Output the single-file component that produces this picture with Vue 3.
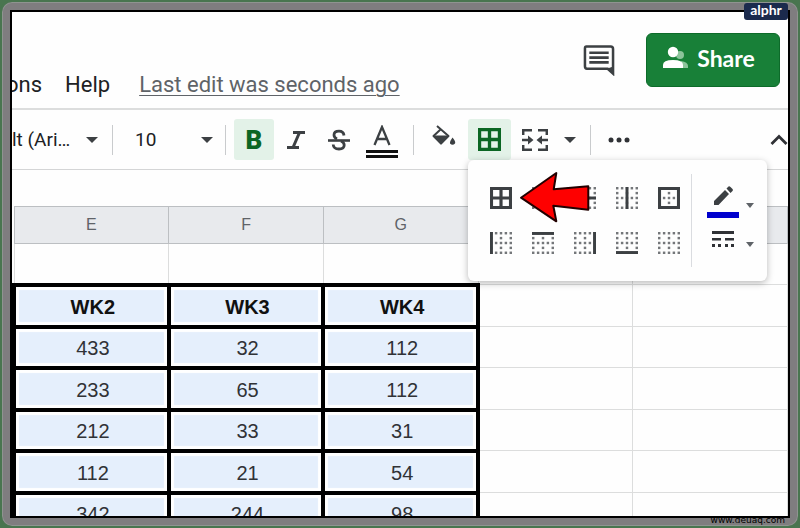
<script setup>
const columns = ['E', 'F', 'G', '', '']
const headings = ['WK2', 'WK3', 'WK4']
const rows = [
  [433, 32, 112],
  [233, 65, 112],
  [212, 33, 31],
  [112, 21, 54],
  [342, 244, 98],
]

const steps = [0, 4, 8, 12, 16]
const dots = []
for (const y of steps) {
  for (const x of steps) {
    if (x % 8 === 0 || y % 8 === 0) dots.push({ x, y })
  }
}

const borderKinds = [
  { name: 'All borders', path: 'M0 0H18V18H0ZM2.500 2.500V7.700H7.700V2.500ZM10.300 2.500V7.700H15.500V2.500ZM2.500 10.300V15.500H7.700V10.300ZM10.300 10.300V15.500H15.500V10.300Z', solid: true },
  { name: 'Inner borders', path: 'M8 0H10V8H18V10H10V18H8V10H0V8H8Z' },
  { name: 'Horizontal borders', path: 'M0 7.800H18V10.200H0Z' },
  { name: 'Vertical borders', path: 'M7.800 0H10.200V18H7.800Z' },
  { name: 'Outer borders', path: 'M0 0H18V18H0ZM2.500 2.500V15.500H15.500V2.500Z', inner: true },
  { name: 'Left border', path: 'M0 0H2.400V18H0Z' },
  { name: 'Top border', path: 'M0 0H18V2.400H0Z' },
  { name: 'Right border', path: 'M15.600 0H18V18H15.600Z' },
  { name: 'Bottom border', path: 'M0 15.600H18V18H0Z' },
  { name: 'Clear borders', path: '' },
]

function dotsFor(kind) {
  if (kind.solid) return []
  if (kind.inner) return dots.filter((d) => d.x > 0 && d.x < 16 && d.y > 0 && d.y < 16)
  return dots
}
</script>

<template>
  <div class="frame">
    <main class="sheet">
      <header class="top">
        <nav class="menu">
          <a href="#" class="cut">ons</a>
          <a href="#">Help</a>
          <a href="#" class="edited">Last edit was seconds ago</a>
        </nav>
        <div class="actions">
          <button class="plain" aria-label="Comments">
            <svg width="32" height="31" viewBox="0 0 32 32">
              <path d="M3 1.500H28Q30.500 1.500 30.500 4V29.500L25 24.500H3.500Q1.500 24.500 1.500 22V3.500Q1.500 1.500 3 1.500Z" fill="none" stroke="#3c4043" stroke-width="2.600" />
              <path d="M24 24.500L31.500 31V22Z" fill="#3c4043" />
              <path d="M6 8H26M6 13H26M6 18H26" stroke="#3c4043" stroke-width="2.800" />
            </svg>
          </button>
          <button class="share">
            <svg width="26" height="24" viewBox="0 0 26 24">
              <g fill="#8cc49b">
                <circle cx="17" cy="9" r="4" />
                <path d="M18 15Q25 16 25 20V22H18Z" />
              </g>
              <circle cx="10" cy="6" r="5.200" fill="#fff" />
              <path d="M0 22V19Q0 14 10 14T20 19V22Z" fill="#fff" />
            </svg>
            Share
          </button>
        </div>
      </header>

      <div class="toolbar">
        <label class="pick family">
          <select aria-label="Font"><option>lt (Ari…</option></select>
          <svg width="12" height="6" viewBox="0 0 12 6"><path d="M0 0H12L6 6Z" fill="#3c4043" /></svg>
        </label>
        <i class="rule"></i>
        <label class="pick size">
          <select aria-label="Font size"><option>10</option></select>
          <svg width="12" height="6" viewBox="0 0 12 6"><path d="M0 0H12L6 6Z" fill="#3c4043" /></svg>
        </label>
        <i class="rule near"></i>
        <button class="tool on bold" aria-label="Bold">B</button>
        <button class="tool" aria-label="Italic">
          <svg width="20" height="20" viewBox="0 0 20 20">
            <path d="M7 2.500H19M1 17.500H13M13.500 2.500L7 17.500" fill="none" stroke="#3c4043" stroke-width="3" />
          </svg>
        </button>
        <button class="tool" aria-label="Strikethrough">
          <svg width="22" height="22" viewBox="0 0 22 22" fill="none" stroke="#3c4043">
            <path d="M16 6.500Q15.500 2.200 11 2.200Q6 2.200 6 6Q6 8.500 9 10M13 12Q16.200 13.500 16.200 16Q16.200 20 11 20Q5.500 20 5.200 15.500" stroke-width="2.800" />
            <path d="M0 11.500H22" stroke-width="2.600" />
          </svg>
        </button>
        <button class="tool ink" aria-label="Text colour">
          <svg width="32" height="34" viewBox="0 0 32 34">
            <path d="M8.500 20L16 2L23.500 20M11 14H21" fill="none" stroke="#3c4043" stroke-width="2.300" />
            <path d="M0 26.500H32M0 31.500H32" stroke="#111" stroke-width="2.800" />
          </svg>
        </button>
        <i class="rule tight"></i>
        <button class="tool fill" aria-label="Fill colour">
          <svg width="24" height="22" viewBox="0 0 24 22">
            <path d="M5 1L16.500 11L9 18.500L1.500 11L8.500 4.500" fill="none" stroke="#3c4043" stroke-width="2" stroke-linejoin="round" />
            <path d="M1 10.500H17L9 19.500Z" fill="#3c4043" />
            <path d="M20.500 12.500Q24 16.500 23 18.500Q20.500 21 18 18.500Q17.500 16.500 20.500 12.500Z" fill="#3c4043" />
          </svg>
        </button>
        <div class="anchor">
          <button class="tool on wide" aria-label="Borders" aria-expanded="true">
            <svg width="23" height="23" viewBox="0 0 18 18"><path :d="borderKinds[0].path" fill="#0b6623" fill-rule="evenodd" /></svg>
          </button>
          <section class="popup" aria-label="Border options">
            <div class="kinds">
              <button v-for="kind in borderKinds" :key="kind.name" class="plain" :aria-label="kind.name">
                <svg width="22" height="22" viewBox="0 0 18 18">
                  <rect v-for="d in dotsFor(kind)" :key="d.x + '-' + d.y" :x="d.x" :y="d.y" width="2" height="2" fill="#74777a" />
                  <path :d="kind.path" fill="#3c4043" fill-rule="evenodd" />
                </svg>
              </button>
            </div>
            <div class="pens">
              <button class="plain" aria-label="Border colour">
                <svg width="32" height="38" viewBox="0 0 32 38">
                  <path d="M7 15L18 4L22 8L11.500 19H7ZM19.500 2.500L21.500 0.500Q22.500 0 23.500 1L25.500 3Q26.500 4 25.500 5L23.500 7Z" fill="#3c4043" />
                  <path d="M0 26H32V32H0Z" fill="#0000cd" />
                </svg>
                <svg class="caret high" width="8" height="5" viewBox="0 0 8 5"><path d="M0 0H8L4 5Z" fill="#5f6368" /></svg>
              </button>
              <button class="plain" aria-label="Border style">
                <svg width="32" height="16" viewBox="0 0 32 16">
                  <path d="M5 0H27V3H5ZM5 7H14V9.500H5ZM18 7H27V9.500H18ZM5 13H8V16H5ZM11 13H14V16H11ZM18 13H21V16H18ZM24 13H27V16H24Z" fill="#303236" />
                </svg>
                <svg class="caret" width="8" height="5" viewBox="0 0 8 5"><path d="M0 0H8L4 5Z" fill="#5f6368" /></svg>
              </button>
            </div>
            <svg class="pointer" width="72" height="52" viewBox="0 0 72 52">
              <path d="M2 26.700L37.300 2L34.700 18.300L69.300 15.300V38.700L34.300 34.700L37.300 50.300Z" fill="#fe0000" stroke="#200" stroke-width="2" stroke-linejoin="round" />
            </svg>
          </section>
        </div>
        <button class="tool merge" aria-label="Merge cells">
          <svg width="26" height="22" viewBox="0 0 26 22" fill="none" stroke="#3c4043" stroke-width="2.500">
            <path d="M1.200 6V1.200H10M16 1.200H24.800V6M1.200 16V20.800H10M16 20.800H24.800V16" />
            <path d="M0 11H8M26 11H18" />
            <path d="M6 6.500L11.500 11L6 15.500ZM20 6.500L14.500 11L20 15.500Z" fill="#3c4043" stroke="none" />
          </svg>
          <svg width="12" height="6" viewBox="0 0 12 6"><path d="M0 0H12L6 6Z" fill="#3c4043" /></svg>
        </button>
        <i class="rule"></i>
        <button class="tool more" aria-label="More">
          <svg width="22" height="6" viewBox="0 0 22 6" fill="#303236"><circle cx="3" cy="3" r="2.500" /><circle cx="11" cy="3" r="2.500" /><circle cx="19" cy="3" r="2.500" /></svg>
        </button>
        <button class="plain hide" aria-label="Hide menus">
          <svg width="18" height="12" viewBox="0 0 18 12"><path d="M1.500 10L9 2.500L16.500 10" fill="none" stroke="#303236" stroke-width="2.800" /></svg>
        </button>
      </div>

      <div class="formula"></div>

      <div class="grid">
        <table>
          <thead>
            <tr><th v-for="(c, i) in columns" :key="i" scope="col">{{ c }}</th></tr>
          </thead>
          <tbody>
            <tr class="blank"><td v-for="(c, i) in columns" :key="i"></td></tr>
            <tr class="line">
              <th v-for="h in headings" :key="h" class="boxed">{{ h }}</th>
              <td></td><td></td>
            </tr>
            <tr v-for="(r, i) in rows" :key="i" class="line">
              <td v-for="(n, j) in r" :key="j" class="boxed">{{ n }}</td>
              <td></td><td></td>
            </tr>
          </tbody>
        </table>
      </div>
    </main>
    <span class="badge">alphr</span>
    <span class="site">www.deuaq.com</span>
  </div>
</template>

<style>
body {
  background: #49754f;
}
</style>

<style scoped>
* {
  box-sizing: border-box;
}
.frame {
  position: relative;
  height: 100vh;
  padding: 8px;
  border: 2px solid #49754f;
  border-radius: 12px;
  background: #7f7d7f;
  box-shadow: inset 0 0 0 1px #8f9490;
  font-family: Roboto, "Liberation Sans", sans-serif;
}
.sheet {
  display: flex;
  flex-direction: column;
  height: 100%;
  border: 2px solid #000;
  background: #fefefe;
  overflow: hidden;
}
button {
  display: flex;
  align-items: center;
  justify-content: center;
  padding: 0;
  border: 0;
  background: none;
  font: inherit;
}
svg {
  display: block;
  flex: none;
}
.top {
  display: flex;
  justify-content: space-between;
  flex: none;
  height: 98px;
  border-bottom: 2px solid #dcdddd;
}
.menu {
  display: flex;
  align-items: flex-end;
  gap: 23px;
  padding-bottom: 10px;
  font-size: 22px;
  line-height: 26px;
  white-space: nowrap;
}
.menu a {
  color: #202124;
  text-decoration: none;
}
.menu .cut {
  margin-left: -6px;
}
.menu .edited {
  margin-left: 6px;
  color: #5f6368;
  text-decoration: underline;
  text-decoration-thickness: 1px;
  text-underline-offset: 3px;
}
.actions {
  display: flex;
  align-items: center;
  gap: 31px;
  padding-right: 8px;
}
.share {
  gap: 8px;
  width: 134px;
  height: 54px;
  padding: 0 8px 4px 0;
  border: 1px solid #0d6b2a;
  border-radius: 6px;
  background: #188038;
  color: #fff;
  font-family: Lato, sans-serif;
  font-size: 23px;
  font-weight: 700;
}
.toolbar {
  display: flex;
  align-items: center;
  flex: none;
  height: 60px;
  border-bottom: 1px solid #d4d5d6;
}
.rule {
  flex: none;
  width: 1px;
  height: 30px;
  margin: 0 14px;
  background: #c9cbcd;
}
.rule.near {
  margin: 0 8px 0 12px;
}
.rule.tight {
  margin: 0 14px 0 10px;
}
.pick {
  display: flex;
  align-items: center;
  justify-content: space-between;
}
.pick select {
  padding: 0;
  border: 0;
  background: none;
  appearance: none;
  color: #202124;
  font: 19px Roboto, sans-serif;
}
.family {
  width: 86px;
}
.size {
  width: 86px;
}
.size select {
  margin-left: 8px;
}
.tool {
  flex: none;
  width: 43px;
  height: 41px;
}
.on {
  width: 40px;
  border-radius: 3px;
  background: #e3f2e8;
}
.wide {
  width: 43px;
}
.bold {
  color: #0b6623;
  font-size: 26px;
  font-weight: 900;
}
.ink svg {
  margin-top: 4px;
}
.fill {
  width: 40px;
  padding-right: 8px;
  padding-bottom: 8px;
}
.anchor {
  position: relative;
}
.merge {
  gap: 16px;
  width: 76px;
}
.merge + .rule {
  margin-left: 3px;
}
.more {
  width: 28px;
}
.hide {
  margin-left: auto;
}
.popup {
  position: absolute;
  z-index: 2;
  top: 41px;
  left: 0;
  display: flex;
  width: 299px;
  padding: 14px 8px 14px 12px;
  border-radius: 6px;
  background: #fefefe;
  box-shadow: 0 2px 7px rgba(0, 0, 0, 0.28);
}
.kinds {
  display: grid;
  grid-template-columns: repeat(5, 42px);
  grid-auto-rows: 45px;
  padding-top: 1px;
  padding-right: 1px;
}
.pens {
  display: grid;
  grid-template-rows: 52px 41px;
  align-items: start;
  padding-left: 15px;
  border-left: 1px solid #dadce0;
}
.pens button {
  gap: 7px;
  padding-top: 12px;
}
.pens button:last-child {
  padding-top: 5px;
}
.caret {
  margin-top: 10px;
}
.caret.high {
  margin-top: 0;
}
.pointer {
  position: absolute;
  top: 11px;
  left: 51px;
}
.formula {
  flex: none;
  height: 36px;
}
.grid {
  flex: 1;
  min-height: 0;
}
table {
  width: 100%;
  table-layout: fixed;
  border-collapse: collapse;
  font: 20px/24px "Liberation Sans", Arial, sans-serif;
  color: #303236;
}
th,
td {
  padding: 0;
  border: 1px solid #dcdddd;
  text-align: center;
}
thead th {
  height: 37px;
  border-color: #bcbfc2;
  background: #e8eaed;
  color: #5f6368;
  font-size: 16px;
  font-weight: 400;
}
.blank td {
  height: 41px;
}
.line > * {
  height: 42px;
}
.line:nth-child(odd) > * {
  height: 41px;
}
.boxed {
  padding: 2px 0 0 3px;
  border: 4px solid #000;
  background: #e5effc;
  box-shadow: inset 0 0 1px 3px #fff;
}
th.boxed {
  color: #111;
}
.badge {
  position: absolute;
  top: 1px;
  right: 10px;
  width: 44px;
  padding-bottom: 3px;
  border-radius: 3px;
  background: #1b2a4d;
  color: #fff;
  font: 700 14px/14px Lato, sans-serif;
  text-align: center;
}
.site {
  position: absolute;
  right: 13px;
  bottom: 0;
  color: #000;
  font: 9px/12px "DejaVu Sans", sans-serif;
}
</style>
